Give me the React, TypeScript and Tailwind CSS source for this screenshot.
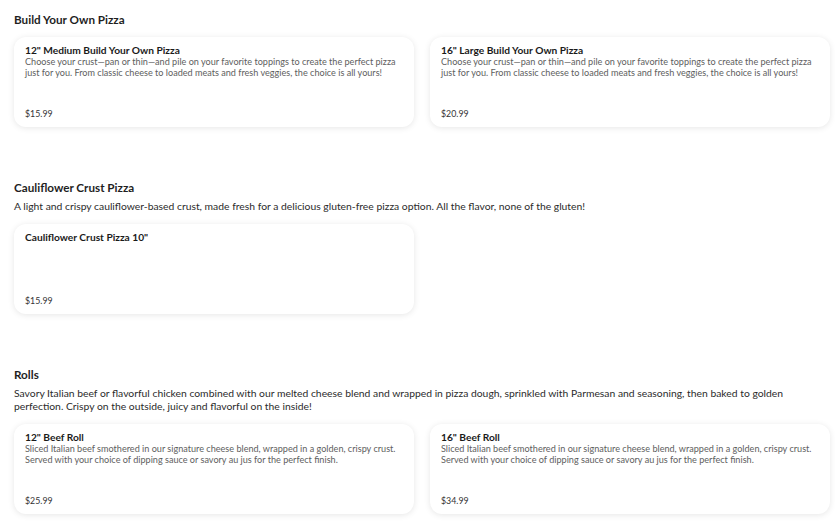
import React from "react";

type Item = { title: string; desc?: string; price: string };
type Section = { title: string; desc?: string; items: Item[] };

const pizzaDesc =
  "Choose your crust\u2014pan or thin\u2014and pile on your favorite toppings to create the perfect pizza just for you. From classic cheese to loaded meats and fresh veggies, the choice is all yours!";
const rollDesc =
  "Sliced Italian beef smothered in our signature cheese blend, wrapped in a golden, crispy crust. Served with your choice of dipping sauce or savory au jus for the perfect finish.";

const sections: Section[] = [
  {
    title: "Build Your Own Pizza",
    items: [
      { title: "12\" Medium Build Your Own Pizza", desc: pizzaDesc, price: "$15.99" },
      { title: "16\" Large Build Your Own Pizza", desc: pizzaDesc, price: "$20.99" },
    ],
  },
  {
    title: "Cauliflower Crust Pizza",
    desc: "A light and crispy cauliflower-based crust, made fresh for a delicious gluten-free pizza option. All the flavor, none of the gluten!",
    items: [{ title: "Cauliflower Crust Pizza 10\"", price: "$15.99" }],
  },
  {
    title: "Rolls",
    desc: "Savory Italian beef or flavorful chicken combined with our melted cheese blend and wrapped in pizza dough, sprinkled with Parmesan and seasoning, then baked to golden perfection. Crispy on the outside, juicy and flavorful on the inside!",
    items: [
      { title: "12\" Beef Roll", desc: rollDesc, price: "$25.99" },
      { title: "16\" Beef Roll", desc: rollDesc, price: "$34.99" },
    ],
  },
];

function Card({ item }: { item: Item }) {
  return (
    <div className="h-[90px] rounded-[12px] bg-white shadow-[0_1px_6px_rgba(0,0,0,0.10)] px-[11px] pt-[7px] pb-[7px] flex flex-col justify-between">
      <div>
        <div className="text-[10.2px] leading-[12px] font-bold text-[#1a1a1a]">{item.title}</div>
        {item.desc && (
          <div className="text-[9.1px] leading-[11px] text-[#5e5e5e]">{item.desc}</div>
        )}
      </div>
      <div className="text-[8.8px] leading-[12px] text-[#333]">{item.price}</div>
    </div>
  );
}

export default function App() {
  return (
    <div
      className="w-[835px] h-[524px] overflow-hidden bg-white pl-[14px] pt-[12px] flex flex-col gap-[53px]"
      style={{ fontFamily: "Lato, 'Noto Sans', sans-serif" }}
    >
      {sections.map((s) => (
        <div key={s.title} className="flex flex-col">
          <div className="text-[11.7px] leading-[14px] font-bold text-[#1f1f1f]">{s.title}</div>
          {s.desc && (
            <div className="mt-[6px] text-[10.35px] leading-[13px] text-[#2b2b2b] w-[800px]">{s.desc}</div>
          )}
          <div className="mt-[11px] grid grid-cols-[400px_400px] gap-x-[16px]">
            {s.items.map((it) => (
              <Card key={it.title} item={it} />
            ))}
          </div>
        </div>
      ))}
    </div>
  );
}
